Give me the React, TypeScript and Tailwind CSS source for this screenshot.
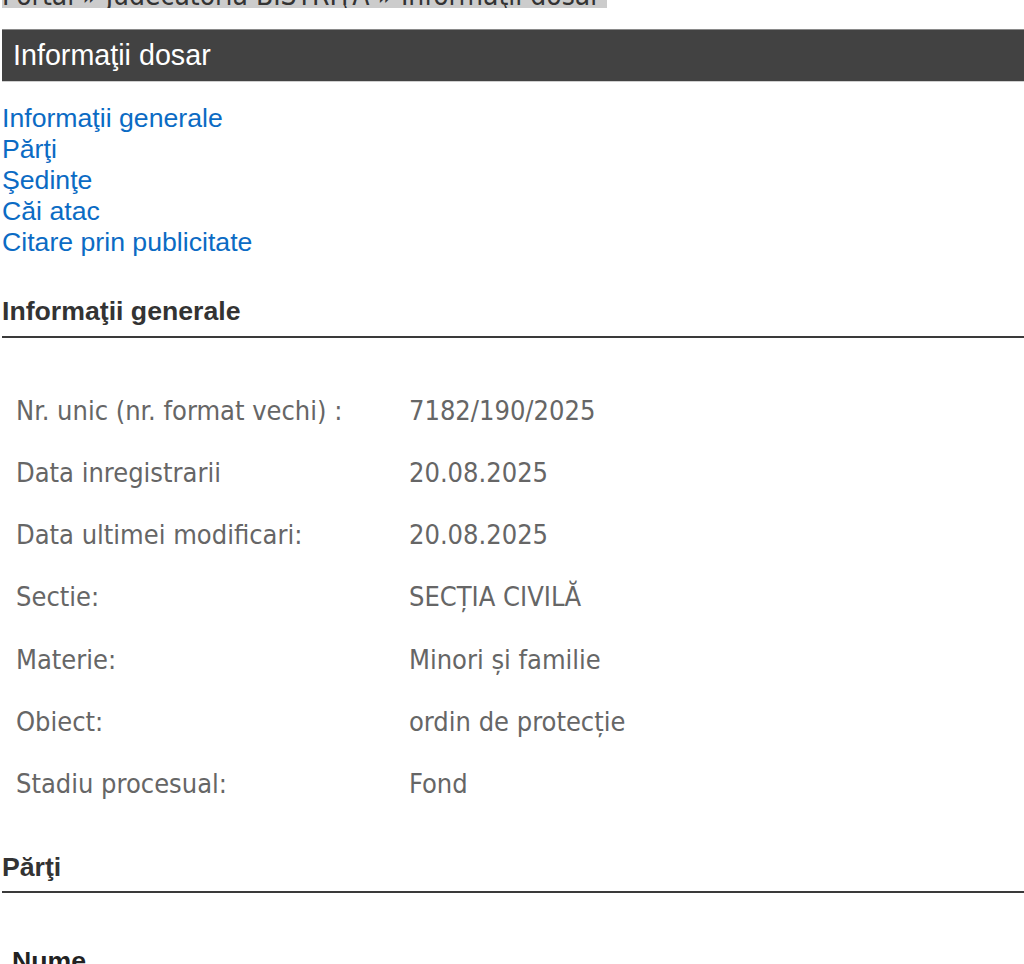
import React from "react";

const rows: [string, string][] = [
  ["Nr. unic (nr. format vechi) :", "7182/190/2025"],
  ["Data inregistrarii", "20.08.2025"],
  ["Data ultimei modificari:", "20.08.2025"],
  ["Sectie:", "SECȚIA CIVILĂ"],
  ["Materie:", "Minori și familie"],
  ["Obiect:", "ordin de protecție"],
  ["Stadiu procesual:", "Fond"],
];

export default function App() {
  return (
    <div className="w-[1024px] h-[964px] overflow-hidden bg-white font-['Liberation_Sans',Arial,sans-serif]">
      <div className="pl-[2px]">
        <div className="-mt-[16px] w-[605px] bg-[#cccccc] text-[28px] leading-[24px] text-[#333333] whitespace-nowrap overflow-hidden font-['DejaVu_Sans_Condensed','DejaVu_Sans',sans-serif]">
          Portal » Judecatoria BISTRIŢA » Informaţii dosar
        </div>

        <div className="mt-[21px] h-[53px] border-t border-t-[#8a8a8a] border-b border-b-[#cfcfcf] bg-[#424242] flex items-center pl-[11px] text-white text-[28.7px]">
          Informaţii dosar
        </div>

        <nav className="mt-[21px] flex flex-col text-[26.67px] leading-[31px] text-[#0b6bc4]">
          <a>Informaţii generale</a>
          <a>Părţi</a>
          <a>Şedinţe</a>
          <a>Căi atac</a>
          <a>Citare prin publicitate</a>
        </nav>

        <h2 className="mt-[38px] text-[26.67px] leading-[31px] font-bold text-[#333333]">
          Informaţii generale
        </h2>
        <div className="mt-[9px] h-[2px] bg-[#3a3a3a]" />

        <div className="mt-[42px] flex flex-col text-[27px] text-[#666666] font-['DejaVu_Sans_Condensed','DejaVu_Sans',sans-serif]">
          {rows.map(([k, v]) => (
            <div key={k} className="h-[62.2px] grid grid-cols-[393px_1fr] items-center pl-[14px]">
              <span>{k}</span>
              <span>{v}</span>
            </div>
          ))}
        </div>

        <h2 className="mt-[37px] text-[26.67px] leading-[31px] font-bold text-[#333333]">
          Părţi
        </h2>
        <div className="mt-[8px] h-[2px] bg-[#3a3a3a]" />

        <div className="mt-[53px] pl-[10px] text-[26.67px] leading-[31px] font-bold text-[#222222]">
          Nume
        </div>
      </div>
    </div>
  );
}
